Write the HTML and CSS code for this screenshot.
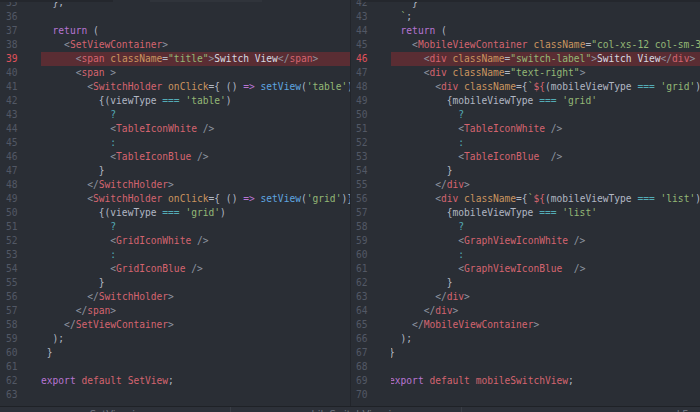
FILE: index.html
```html
<!DOCTYPE html>
<html lang="en">
<head>
    <meta charset="UTF-8">
    <meta name="viewport" content="width=device-width, initial-scale=1.0">
    <link rel="stylesheet" href="styles.css">
    <title>Split Diff View</title>
</head>
<body>
    <div class="editor">
        <!-- bottom edge of the panel above -->
        <div class="top-edge">
            <span class="edge edge-a"></span>
            <span class="edge edge-b"></span>
            <span class="edge edge-c"></span>
        </div>

        <div class="panes">
            <!-- Left file -->
            <div class="pane pane-left">
                <div class="gutter">
                    <div class="lines">
                        <div class="line">35</div><div class="line">36</div><div class="line">37</div><div class="line">38</div>
                        <div class="line num-del">39</div><div class="line">40</div><div class="line">41</div><div class="line">42</div>
                        <div class="line">43</div><div class="line">44</div><div class="line">45</div><div class="line">46</div>
                        <div class="line">47</div><div class="line">48</div><div class="line">49</div><div class="line">50</div>
                        <div class="line">51</div><div class="line">52</div><div class="line">53</div><div class="line">54</div>
                        <div class="line">55</div><div class="line">56</div><div class="line">57</div><div class="line">58</div>
                        <div class="line">59</div><div class="line">60</div><div class="line">61</div><div class="line">62</div>
                        <div class="line">63</div>
                    </div>
                </div>
                <div class="code">
                    <div class="lines">
<div class="line">  };</div>
<div class="line"></div>
<div class="line">  <span class="k">return</span> (</div>
<div class="line">    <span class="p">&lt;</span><span class="t">SetViewContainer</span><span class="p">&gt;</span></div>
<div class="line del">      <span class="p">&lt;</span><span class="t">span</span> <span class="a">className</span>=<span class="s">"title"</span><span class="p">&gt;</span><span class="w">Switch View</span><span class="p">&lt;/</span><span class="t">span</span><span class="p">&gt;</span></div>
<div class="line">      <span class="p">&lt;</span><span class="t">span</span> <span class="p">&gt;</span></div>
<div class="line">        <span class="p">&lt;</span><span class="t">SwitchHolder</span> <span class="a">onClick</span>={ () <span class="k">=&gt;</span> <span class="f">setView</span>(<span class="s">'table'</span>) }<span class="p">&gt;</span></div>
<div class="line">          {(viewType <span class="o">===</span> <span class="s">'table'</span>)</div>
<div class="line">            <span class="o">?</span></div>
<div class="line">            <span class="p">&lt;</span><span class="t">TableIconWhite</span> <span class="p">/&gt;</span></div>
<div class="line">            <span class="o">:</span></div>
<div class="line">            <span class="p">&lt;</span><span class="t">TableIconBlue</span> <span class="p">/&gt;</span></div>
<div class="line">          }</div>
<div class="line">        <span class="p">&lt;/</span><span class="t">SwitchHolder</span><span class="p">&gt;</span></div>
<div class="line">        <span class="p">&lt;</span><span class="t">SwitchHolder</span> <span class="a">onClick</span>={ () <span class="k">=&gt;</span> <span class="f">setView</span>(<span class="s">'grid'</span>)}<span class="p">&gt;</span></div>
<div class="line">          {(viewType <span class="o">===</span> <span class="s">'grid'</span>)</div>
<div class="line">            <span class="o">?</span></div>
<div class="line">            <span class="p">&lt;</span><span class="t">GridIconWhite</span> <span class="p">/&gt;</span></div>
<div class="line">            <span class="o">:</span></div>
<div class="line">            <span class="p">&lt;</span><span class="t">GridIconBlue</span> <span class="p">/&gt;</span></div>
<div class="line">          }</div>
<div class="line">        <span class="p">&lt;/</span><span class="t">SwitchHolder</span><span class="p">&gt;</span></div>
<div class="line">      <span class="p">&lt;/</span><span class="t">span</span><span class="p">&gt;</span></div>
<div class="line">    <span class="p">&lt;/</span><span class="t">SetViewContainer</span><span class="p">&gt;</span></div>
<div class="line">  );</div>
<div class="line"> }</div>
<div class="line"></div>
<div class="line"><span class="k">export</span> <span class="t">default</span> <span class="t">SetView</span>;</div>
<div class="line"></div>
                    </div>
                </div>
            </div>

            <!-- Right file -->
            <div class="pane pane-right">
                <div class="gutter">
                    <div class="lines">
                        <div class="line">42</div><div class="line">43</div><div class="line">44</div><div class="line">45</div>
                        <div class="line num-del">46</div><div class="line">47</div><div class="line">48</div><div class="line">49</div>
                        <div class="line">50</div><div class="line">51</div><div class="line">52</div><div class="line">53</div>
                        <div class="line">54</div><div class="line">55</div><div class="line">56</div><div class="line">57</div>
                        <div class="line">58</div><div class="line">59</div><div class="line">60</div><div class="line">61</div>
                        <div class="line">62</div><div class="line">63</div><div class="line">64</div><div class="line">65</div>
                        <div class="line">66</div><div class="line">67</div><div class="line">68</div><div class="line">69</div>
                        <div class="line">70</div>
                    </div>
                </div>
                <div class="code">
                    <div class="lines">
<div class="line">    }</div>
<div class="line">  <span class="s">`</span>;</div>
<div class="line">  <span class="k">return</span> (</div>
<div class="line">    <span class="p">&lt;</span><span class="t">MobileViewContainer</span> <span class="a">className</span>=<span class="s">"col-xs-12 col-sm-3 col-md-3"</span><span class="p">&gt;</span></div>
<div class="line del">      <span class="p">&lt;</span><span class="t">div</span> <span class="a">className</span>=<span class="s">"switch-label"</span><span class="p">&gt;</span><span class="w">Switch View</span><span class="p">&lt;/</span><span class="t">div</span><span class="p">&gt;</span></div>
<div class="line">      <span class="p">&lt;</span><span class="t">div</span> <span class="a">className</span>=<span class="s">"text-right"</span><span class="p">&gt;</span></div>
<div class="line">        <span class="p">&lt;</span><span class="t">div</span> <span class="a">className</span>={<span class="s">`</span><span class="t">${</span>(mobileViewType <span class="o">===</span> <span class="s">'grid'</span>) ? 'active' : ''}<span class="s">`</span>}<span class="p">&gt;</span></div>
<div class="line">          {mobileViewType <span class="o">===</span> <span class="s">'grid'</span></div>
<div class="line">            <span class="o">?</span></div>
<div class="line">            <span class="p">&lt;</span><span class="t">TableIconWhite</span> <span class="p">/&gt;</span></div>
<div class="line">            <span class="o">:</span></div>
<div class="line">            <span class="p">&lt;</span><span class="t">TableIconBlue</span>  <span class="p">/&gt;</span></div>
<div class="line">          }</div>
<div class="line">        <span class="p">&lt;/</span><span class="t">div</span><span class="p">&gt;</span></div>
<div class="line">        <span class="p">&lt;</span><span class="t">div</span> <span class="a">className</span>={<span class="s">`</span><span class="t">${</span>(mobileViewType <span class="o">===</span> <span class="s">'list'</span>) ? 'active' : ''}<span class="s">`</span>}<span class="p">&gt;</span></div>
<div class="line">          {mobileViewType <span class="o">===</span> <span class="s">'list'</span></div>
<div class="line">            <span class="o">?</span></div>
<div class="line">            <span class="p">&lt;</span><span class="t">GraphViewIconWhite</span> <span class="p">/&gt;</span></div>
<div class="line">            <span class="o">:</span></div>
<div class="line">            <span class="p">&lt;</span><span class="t">GraphViewIconBlue</span>  <span class="p">/&gt;</span></div>
<div class="line">          }</div>
<div class="line">        <span class="p">&lt;/</span><span class="t">div</span><span class="p">&gt;</span></div>
<div class="line">      <span class="p">&lt;/</span><span class="t">div</span><span class="p">&gt;</span></div>
<div class="line">    <span class="p">&lt;/</span><span class="t">MobileViewContainer</span><span class="p">&gt;</span></div>
<div class="line">  );</div>
<div class="line">}</div>
<div class="line"></div>
<div class="line"><span class="k">export</span> <span class="t">default</span> <span class="t">mobileSwitchView</span>;</div>
<div class="line"></div>
                    </div>
                </div>
            </div>
        </div>

        <!-- status / tab bar, mostly cut off -->
        <div class="status-bar">
            <div class="status-item status-first">SetView.js</div>
            <div class="status-item">mobileSwitchView.js</div>
            <div class="status-item status-last">LF</div>
        </div>
    </div>
</body>
</html>
```

FILE: styles.css
```css
body {
    margin: 0;
    background-color: #2a2e35;
    color: #b1b7c3;
    font-family: "DejaVu Sans Mono", "Liberation Mono", monospace;
    font-size: 9.6px;
    overflow: hidden;
}

.editor {
    position: relative;
    height: 412px;
    display: flex;
    flex-direction: column;
}

/* thin edge of the panel sitting above the diff */
.top-edge {
    position: absolute;
    top: 0;
    left: 0;
    right: 0;
    height: 2px;
    display: flex;
    z-index: 2;
}

.edge {
    height: 2px;
}

.edge-a {
    width: 113px;
    background: #24272d;
}

.edge-b {
    width: 112px;
    margin-left: 37px;
    background: #30343b;
}

.edge-c {
    flex: 1;
    margin-left: 100px;
    background: #24272d;
}

.panes {
    display: flex;
    height: 406px;
    overflow: hidden;
}

.pane {
    display: flex;
    overflow: hidden;
}

.pane-left {
    width: 350px;
    flex: none;
}

.pane-right {
    flex: 1;
    border-left: 1px solid #22252b;
}

.gutter {
    flex: none;
    color: #525865;
}

.pane-left .gutter {
    width: 35px;
    padding-left: 6px;
}

.pane-right .gutter {
    width: 35px;
    padding-left: 5px;
}

.code {
    flex: 1;
    overflow: hidden;
}

.lines {
    margin-top: -4px;
}

/* right file is scrolled a couple of pixels sideways */
.pane-right .code .lines {
    margin-left: -2px;
}

.line {
    height: 14px;
    line-height: 14px;
    white-space: pre;
}

/* removed line */
.del {
    background-color: #5a2d33;
}

.num-del {
    color: #e0525b;
}

/* syntax colours */
.k { color: #b775d2; }
.t { color: #d4646f; }
.a { color: #c9945f; }
.s { color: #94b875; }
.f { color: #5fa6e0; }
.o { color: #53abb6; }
.p { color: #8f96a2; }
.w { color: #d6dae2; }

.status-bar {
    height: 5px;
    border-top: 1px solid #1f2227;
    background-color: #2d3139;
    display: flex;
    overflow: hidden;
    color: #6c727e;
    font-family: "DejaVu Sans", sans-serif;
    font-size: 10px;
}

.status-item {
    width: 230px;
    padding-top: 2px;
    line-height: 12px;
    text-align: center;
    border-right: 1px solid #3a3e46;
}

.status-last {
    flex: 1;
    border-right: none;
    text-align: right;
    padding-right: 12px;
}
```
